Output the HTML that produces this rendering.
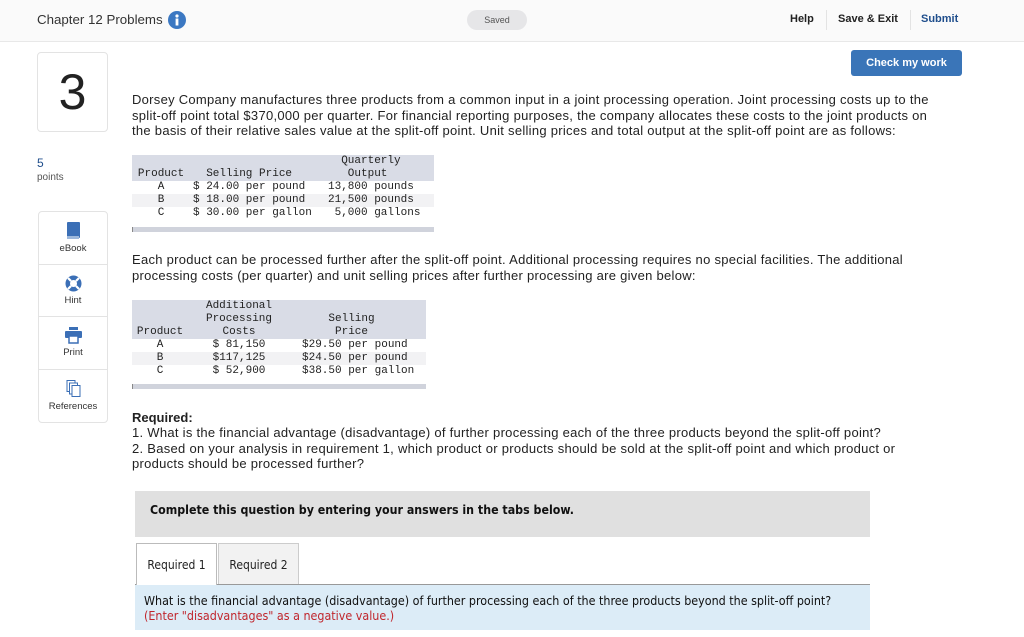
<!DOCTYPE html>
<html><head><meta charset="utf-8">
<style>
*{box-sizing:border-box;margin:0;padding:0}
body{width:1024px;height:637px;overflow:hidden;background:#fff;font-family:"Liberation Sans",sans-serif;color:#222;position:relative}
.abs{position:absolute}
.hdr{left:0;top:0;width:1024px;height:42px;background:#fafafa;border-bottom:1px solid #e8e8e8}
.mono{font-family:"Liberation Mono",monospace;font-size:11px;line-height:13px;color:#222;white-space:pre}
p.t{font-size:13px;line-height:15.5px;color:#222;letter-spacing:0.28px;white-space:nowrap}
.side{left:38px;width:70px;border:1px solid #e3e3e3;border-radius:4px}
.cell{height:52.5px;border-bottom:1px solid #e3e3e3;text-align:center;font-size:9.5px;color:#333;padding-top:10px}
.cell:last-child{border-bottom:none}
.cell svg{display:block;margin:0 auto 3px}
.tah{font-family:"DejaVu Sans Condensed","Liberation Sans",sans-serif}
</style></head><body>
<div class="abs hdr"></div>
<div class="abs" style="left:37px;top:12px;font-size:13.3px;color:#333">Chapter 12 Problems</div>
<svg class="abs" style="left:168px;top:11px" width="18" height="18"><circle cx="9" cy="9" r="9" fill="#3b78c2"/><circle cx="9" cy="5" r="1.6" fill="#fff"/><rect x="7.6" y="7.5" width="2.8" height="7" fill="#fff"/></svg>
<div class="abs" style="left:467px;top:10px;width:60px;height:20px;border-radius:10px;background:#e6e6e8;font-size:9px;color:#555;text-align:center;line-height:20px">Saved</div>
<div class="abs" style="left:790px;top:13px;font-size:11px;font-weight:bold;color:#222">Help</div>
<div class="abs" style="left:826px;top:10px;width:1px;height:20px;background:#e3e3e3"></div>
<div class="abs" style="left:838px;top:13px;font-size:11px;font-weight:bold;color:#222">Save &amp; Exit</div>
<div class="abs" style="left:910px;top:10px;width:1px;height:20px;background:#e3e3e3"></div>
<div class="abs" style="left:921px;top:13px;font-size:11px;font-weight:bold;color:#1f4e8c">Submit</div>
<div class="abs" style="left:851px;top:50px;width:111px;height:26px;background:#3a75b8;border-radius:3px;color:#fff;font-size:11px;font-weight:bold;text-align:center;line-height:26px">Check my work</div>

<div class="abs" style="left:37px;top:52px;width:71px;height:80px;border:1px solid #e3e3e3;border-radius:4px;font-size:50px;text-align:center;line-height:78px;color:#222">3</div>
<div class="abs" style="left:37px;top:156px;font-size:12px;color:#1f4e8c">5</div>
<div class="abs" style="left:37px;top:172px;font-size:10px;color:#555">points</div>

<div class="abs side" style="top:211px;height:212px">
<div class="cell"><svg width="14" height="18"><rect x="1" y="0" width="13" height="16" rx="1" fill="#3b6fb6"/><rect x="1" y="14" width="12" height="3" fill="#9db8dc"/></svg>eBook</div>
<div class="cell"><svg width="17" height="17"><circle cx="8.5" cy="8.5" r="8" fill="#3b6fb6"/><circle cx="8.5" cy="8.5" r="3.5" fill="#fff"/><path d="M3 3l3 3M14 3l-3 3M3 14l3-3M14 14l-3-3" stroke="#fff" stroke-width="2.2"/></svg>Hint</div>
<div class="cell"><svg width="17" height="17"><rect x="4" y="0" width="9" height="3" fill="#3b6fb6"/><rect x="0" y="4" width="17" height="7" rx="1" fill="#3b6fb6"/><rect x="4" y="9" width="9" height="7" fill="#fff" stroke="#3b6fb6" stroke-width="1.5"/></svg>Print</div>
<div class="cell"><svg width="15" height="18"><rect x="1" y="0.5" width="8" height="11" fill="#fff" stroke="#3b6fb6"/><rect x="3.5" y="3" width="8" height="11" fill="#fff" stroke="#3b6fb6"/><rect x="6" y="5.5" width="8" height="11" fill="#fff" stroke="#3b6fb6"/></svg>References</div>
</div>

<p class="abs t" style="left:132px;top:92px">Dorsey Company manufactures three products from a common input in a joint processing operation. Joint processing costs up to the<br>split-off point total $370,000 per quarter. For financial reporting purposes, the company allocates these costs to the joint products on<br>the basis of their relative sales value at the split-off point. Unit selling prices and total output at the split-off point are as follows:</p>

<div class="abs" style="left:132px;top:155px;width:302px;height:26px;background:#d9dce6"></div>
<div class="abs" style="left:132px;top:194px;width:302px;height:13px;background:#f2f2f4"></div>
<div class="abs" style="left:132px;top:227px;width:302px;height:5px;background:#d0d3dc;border-left:1px solid #888"></div>
<div class="abs mono" style="left:132px;top:155px;width:58px;text-align:center"> 
Product
A
B
C</div>
<div class="abs mono" style="left:193px;top:155px">
  Selling Price
$ 24.00 per pound
$ 18.00 per pound
$ 30.00 per gallon</div>
<div class="abs mono" style="left:328px;top:155px">  Quarterly
   Output
13,800 pounds
21,500 pounds
 5,000 gallons</div>

<p class="abs t" style="left:132px;top:252px">Each product can be processed further after the split-off point. Additional processing requires no special facilities. The additional<br>processing costs (per quarter) and unit selling prices after further processing are given below:</p>

<div class="abs" style="left:132px;top:300px;width:294px;height:39px;background:#d9dce6"></div>
<div class="abs" style="left:132px;top:352px;width:294px;height:13px;background:#f2f2f4"></div>
<div class="abs" style="left:132px;top:384px;width:294px;height:5px;background:#d0d3dc;border-left:1px solid #888"></div>
<div class="abs mono" style="left:132px;top:300px;width:56px;text-align:center"> 
 
Product
A
B
C</div>
<div class="abs mono" style="left:195px;top:300px;width:88px;text-align:center">Additional
Processing
Costs
$ 81,150
$117,125
$ 52,900</div>
<div class="abs mono" style="left:302px;top:300px"> 
    Selling
     Price
$29.50 per pound
$24.50 per pound
$38.50 per gallon</div>

<p class="abs t" style="left:132px;top:410px;font-weight:bold;letter-spacing:0">Required:</p>
<p class="abs t" style="left:132px;top:425px">1. What is the financial advantage (disadvantage) of further processing each of the three products beyond the split-off point?<br>2. Based on your analysis in requirement 1, which product or products should be sold at the split-off point and which product or<br>products should be processed further?</p>

<div class="abs tah" style="left:135px;top:491px;width:735px;height:46px;background:#e0e0e0;font-size:12.3px;font-weight:bold;padding:12px 0 0 15px;color:#111">Complete this question by entering your answers in the tabs below.</div>
<div class="abs" style="left:135px;top:584px;width:735px;height:1px;background:#999"></div>
<div class="abs tah" style="left:136px;top:543px;width:81px;height:42px;background:#fff;border:1px solid #bbb;border-bottom:none;font-size:12px;text-align:center;line-height:42px">Required 1</div>
<div class="abs tah" style="left:218px;top:543px;width:81px;height:41px;background:#f2f2f2;border:1px solid #ccc;border-bottom:none;font-size:12px;text-align:center;line-height:42px">Required 2</div>
<div class="abs tah" style="left:135px;top:585px;width:735px;height:45px;background:#dcecf7;font-size:12.4px;padding:8px 0 0 9px;line-height:15px;color:#111;white-space:nowrap">What is the financial advantage (disadvantage) of further processing each of the three products beyond the split-off point?<br><span style="color:#c0262d">(Enter "disadvantages" as a negative value.)</span></div>
</body></html>
